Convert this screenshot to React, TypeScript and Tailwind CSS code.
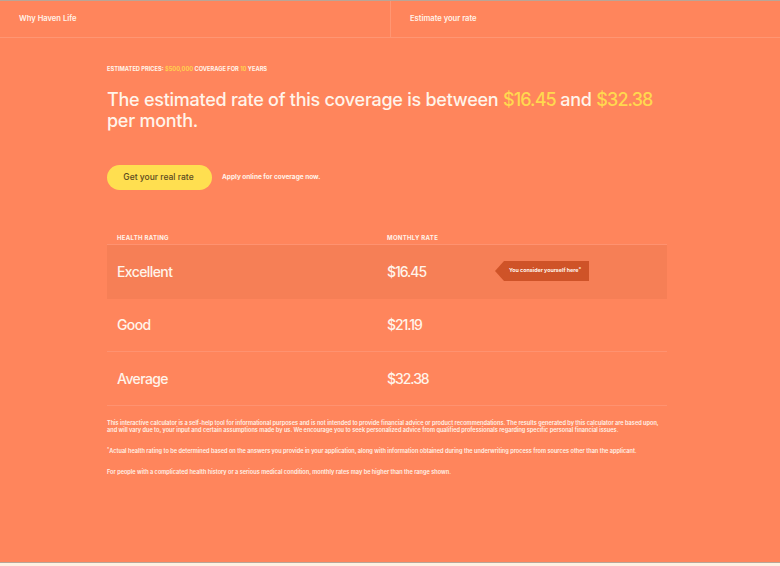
const rows = [
  { rating: 'Excellent', rate: '$16.45', current: true },
  { rating: 'Good', rate: '$21.19', current: false },
  { rating: 'Average', rate: '$32.38', current: false },
];

function RateRow({ rating, rate, current }: { rating: string; rate: string; current: boolean }) {
  return (
    <div
      className={`flex h-[53.5px] items-center border-b pl-[10px] ${
        current ? 'border-transparent bg-[#f67f56]' : 'border-[#ff9270]'
      }`}
    >
      <div className="w-[270px] text-[14px] font-[550] tracking-[-0.6px] text-[#fff4ea]">{rating}</div>
      <div className="w-[108px] text-[14px] font-[550] tracking-[-1.05px] text-[#fff4ea]">{rate}</div>
      {current && (
        <div className="flex h-5 items-center">
          <svg width="9" height="20" viewBox="0 0 9 20" className="block">
            <path d="M9 0 L0 10 L9 20 Z" fill="#cf5328" />
          </svg>
          <div className="flex h-5 w-[85px] items-center whitespace-nowrap bg-[#cf5328] pl-[5px] text-[5.3px] font-bold text-[#fff4ea]">
            You consider yourself here<sup className="text-[5px]">*</sup>
          </div>
        </div>
      )}
    </div>
  );
}

export default function App() {
  return (
    <div className="flex h-[566px] flex-col overflow-hidden bg-[#fff1e3] font-['Inter',sans-serif] text-[#fff4ea]">
      <div className="flex h-[563px] flex-col border-y border-y-[#b9a597] bg-[#ff855c]">
        <nav className="flex h-[37px] border-b border-[#ff9673] text-[7.6px] font-semibold">
          <div className="flex w-[391px] items-center border-r border-[#ff9673] pl-[19px]">Why Haven Life</div>
          <div className="flex items-center pl-[19px]">Estimate your rate</div>
        </nav>

        <main className="flex flex-col pl-[107px] pr-[113px] pt-[27px]">
          <p className="text-[5.7px] font-bold leading-[8px]">
            ESTIMATED PRICES: <span className="text-[#ffd34f]">$500,000</span> COVERAGE FOR{' '}
            <span className="text-[#ffd34f]">10</span> YEARS
          </p>
          <h1 className="mt-[16px] w-[560px] text-[18px] font-medium leading-[21px] tracking-[-0.26px]">
            The estimated rate of this coverage is between{' '}
            <span className="tracking-[-0.9px] text-[#ffd84f]">$16.45</span> and{' '}
            <span className="tracking-[-0.9px] text-[#ffd84f]">$32.38</span> per month.
          </h1>

          <div className="mt-[34px] flex items-center gap-[10px]">
            <button className="h-[25px] w-[105px] rounded-full bg-[#ffdf50] pr-[2px] text-[8.5px] font-medium text-[#5b4a22]">
              Get your real rate
            </button>
            <span className="text-[6.5px] font-bold">Apply online for coverage now.</span>
          </div>

          <div className="mt-[40px] flex h-[15px] items-center border-b border-[#ff9270] pl-[10px] text-[6px] font-bold tracking-[0.3px]">
            <div className="w-[270px]">HEALTH RATING</div>
            <div>MONTHLY RATE</div>
          </div>
          {rows.map((row) => (
            <RateRow key={row.rating} {...row} />
          ))}

          <div className="mt-[14px] flex w-[556px] flex-col gap-[13.5px] text-[5.6px] font-semibold leading-[7.5px]">
            <p>
              This interactive calculator is a self-help tool for informational purposes and is not intended to provide
              financial advice or product recommendations. The results generated by this calculator are based upon,
              and will vary due to, your input and certain assumptions made by us. We encourage you to seek personalized
              advice from qualified professionals regarding specific personal financial issues.
            </p>
            <p>
              <sup>*</sup>Actual health rating to be determined based on the answers you provide in your application,
              along with information obtained during the underwriting process from sources other than the applicant.
            </p>
            <p>For people with a complicated health history or a serious medical condition, monthly rates may be higher than the range shown.</p>
          </div>
        </main>
      </div>
    </div>
  );
}
